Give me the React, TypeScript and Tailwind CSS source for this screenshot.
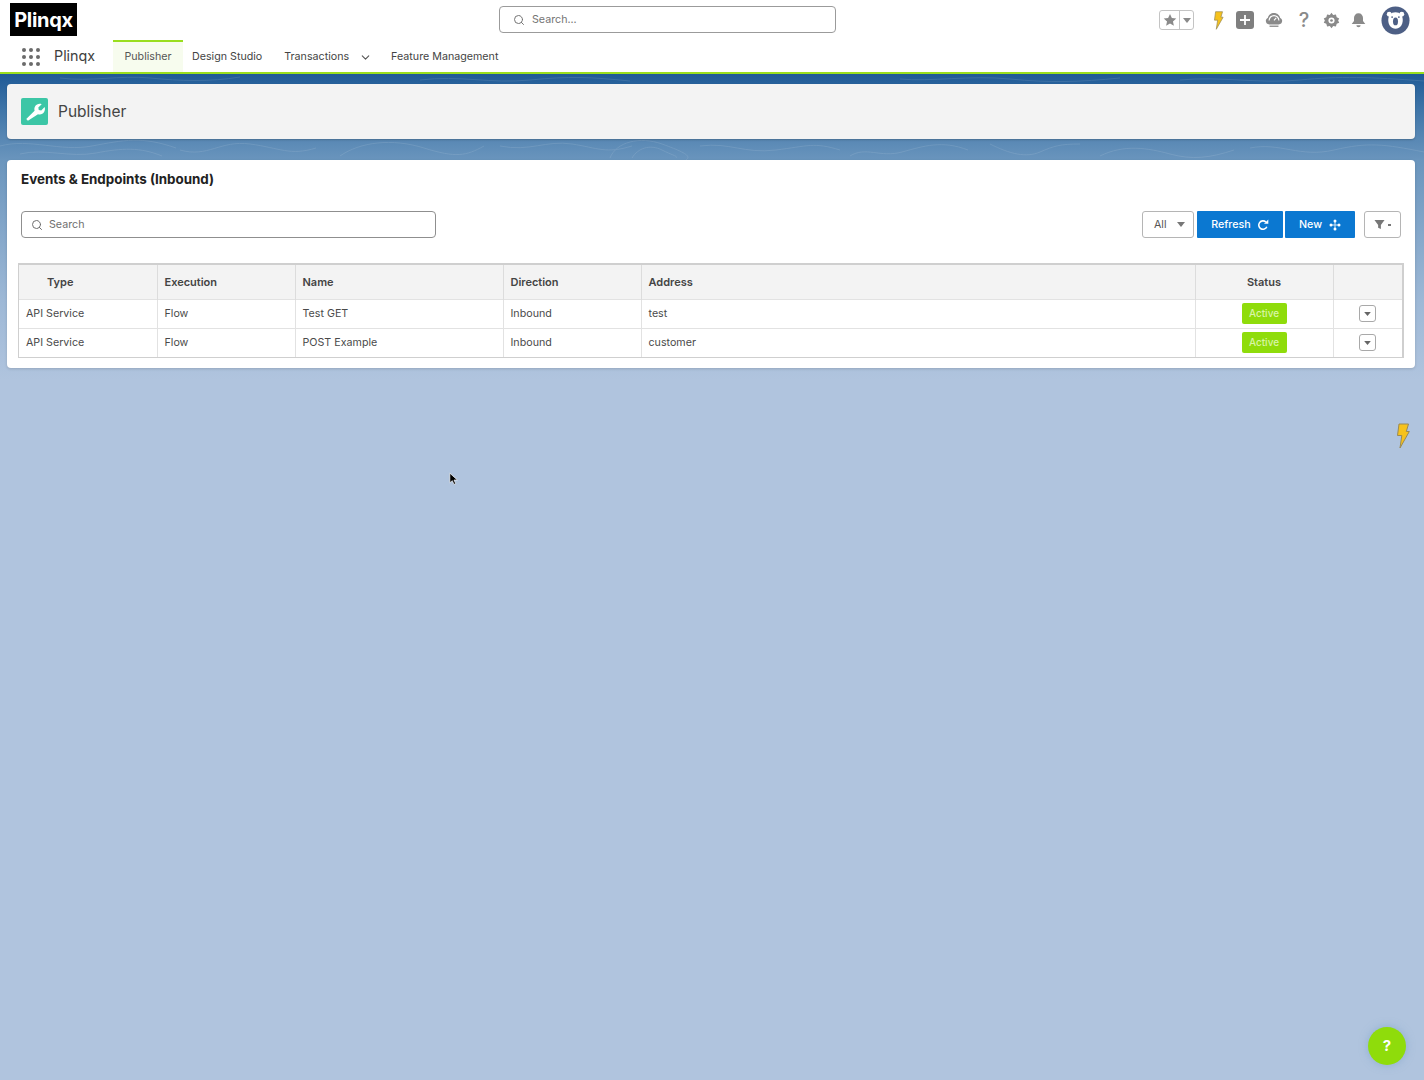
import { ChevronDown, Search } from "lucide-react";

const font = "font-['Inter','Liberation_Sans',sans-serif]";

const rows = [
  { type: "API Service", execution: "Flow", name: "Test GET", direction: "Inbound", address: "test" },
  { type: "API Service", execution: "Flow", name: "POST Example", direction: "Inbound", address: "customer" },
];

// contour lines of the banner behind the page header
const contours = [
  "M0 146c30-8 60 6 92 0s50-10 84 2",
  "M20 154c24-6 50 4 76-1s44-6 66 3",
  "M180 150c28 8 40-10 70-6s40 12 66 4",
  "M340 156c20-14 52-18 84-8s42 8 60-2",
  "M500 146c30 6 46-6 72-2s34 10 60 2",
  "M610 158c6-16 30-22 52-14s30 12 24 16",
  "M632 158c6-10 18-14 30-8s16 6 14 8",
  "M700 146c30-4 44 8 76 4s38-8 64 0",
  "M850 156c16-10 30 2 52-4s40-12 66-2",
  "M990 144c20 10 36 14 50 8s20-8 40-8",
  "M1100 156c24-12 48-8 70-2s40 4 64-4",
  "M1250 148c30-6 50 10 84 2s50-6 90 2",
  "M60 78c30 4 60-3 90 0s60 4 90-1",
  "M420 80c40-5 70 4 110 0s60-3 100 1",
  "M900 79c30 3 70-4 110 0s70 3 110-1",
  "M1180 80c40-4 80 4 120 0s70-3 124 1",
];

const Bolt = ({ className }: { className: string }) => (
  <svg viewBox="0 0 14 26" className={className}>
    <path d="M3 1h9.500l-2.200 7.500h3L4 25l1.800-12.500H1.500z" fill="#f6c21c" stroke="#9a8a55" strokeWidth="1" strokeLinejoin="round" />
  </svg>
);

const Caret = ({ className }: { className: string }) => (
  <svg viewBox="0 0 10 6" className={className}>
    <path d="M0 0h10L5 6z" fill="currentColor" />
  </svg>
);

const Header = () => (
  <header className="relative h-[74px] bg-white border-b-2 border-[#9ade1e]">
    <div className="flex items-start justify-between h-[40px]">
      <div className="ml-[10px] mt-[3px] w-[67px] h-[33px] bg-black flex items-center justify-center text-white text-[20px] font-bold tracking-[-0.3px]">
        Plinqx
      </div>
      <div className="absolute left-[499px] top-[6px] w-[337px] h-[27px] rounded-[4px] border border-[#9b9b9b] flex items-center pl-[13px] gap-[7px] text-[10.700px] text-[#747474]">
        <Search size={12} strokeWidth={2} />
        <span className="pt-[2px]">Search...</span>
      </div>
      <div className="flex items-center mt-[5px] mr-[14px] h-[30px]">
        <div className="flex items-center w-[35px] h-[20px] rounded-[3px] border border-[#c4c4c4] mr-[19px] text-[#8a8a8a]">
          <div className="w-[20px] flex justify-center border-r border-[#c4c4c4] h-full items-center">
            <svg viewBox="0 0 24 24" className="w-[14px] h-[14px]">
              <path d="M12 1.500l3.200 7 7.600.8-5.700 5.100 1.600 7.500L12 18l-6.700 3.900 1.600-7.500L1.200 9.300l7.600-.8z" fill="currentColor" />
            </svg>
          </div>
          <Caret className="w-[8px] h-[5px] ml-[3px]" />
        </div>
        <Bolt className="w-[11px] h-[19px] mr-[12px]" />
        <div className="w-[18px] h-[18px] rounded-[3px] bg-[#7f7f7f] flex items-center justify-center mr-[11px]">
          <svg viewBox="0 0 12 12" className="w-[12px] h-[12px]">
            <path d="M6 1v10M1 6h10" stroke="#fff" strokeWidth="1.800" />
          </svg>
        </div>
        <svg viewBox="0 0 20 18" className="w-[18px] h-[16px] mr-[15px]">
          <path d="M10 1c3.500 0 6.400 2.400 7 5.800 1.400.7 2.200 1.900 2.200 3.400 0 2.200-1.700 3.800-3.900 3.800H4.700C2.500 14 .8 12.400.8 10.200c0-1.500.8-2.700 2.200-3.400C3.600 3.400 6.500 1 10 1z" fill="#8a8a8a" />
          <path d="M4.500 9.500a5.500 5.500 0 0 1 11 0M10 9.500l2.500-3" stroke="#fff" strokeWidth="1.300" fill="none" />
          <path d="M5 16h10" stroke="#8a8a8a" strokeWidth="1.500" />
        </svg>
        <span className="text-[20px] leading-none font-medium text-[#8a8a8a] w-[12px] mr-[13px] text-center">?</span>
        <svg viewBox="0 0 20 20" className="w-[17px] h-[17px] mr-[10px]">
          <path d="M10 1l2 2.600 3.200-.6.900 3.200 3 1.300L17.800 10l1.300 2.500-3 1.300-.9 3.200-3.200-.6L10 19l-2-2.600-3.200.6-.9-3.200-3-1.300L2.200 10 .9 7.500l3-1.300.9-3.200 3.200.6z" fill="#8a8a8a" />
          <circle cx="10" cy="10" r="3.600" fill="#fff" />
          <circle cx="10" cy="10" r="1.600" fill="#8a8a8a" />
        </svg>
        <svg viewBox="0 0 20 20" className="w-[17px] h-[17px] mr-[14px]">
          <path d="M10 1.500c3.300 0 5.300 2.500 5.300 5.700v3.300l2.700 3.700H2l2.700-3.700V7.200C4.700 4 6.700 1.500 10 1.500z" fill="#8a8a8a" />
          <path d="M7.500 15.500h5a2.500 2.500 0 0 1-5 0z" fill="#8a8a8a" />
        </svg>
        <svg viewBox="0 0 30 30" className="w-[29px] h-[29px]">
          <circle cx="15" cy="15" r="14.500" fill="#4d5f85" />
          <circle cx="8.500" cy="8.500" r="2.500" fill="#fff" />
          <circle cx="21.500" cy="8.500" r="2.500" fill="#fff" />
          <path d="M15 6.500c5 0 7.500 3.500 7.500 8 0 5-3 9-7.500 9s-7.500-4-7.500-9c0-4.500 2.500-8 7.500-8z" fill="#fff" />
          <ellipse cx="15" cy="16" rx="2.600" ry="4" fill="#4d5f85" />
          <circle cx="11.500" cy="11.500" r=".9" fill="#4d5f85" />
          <circle cx="18.500" cy="11.500" r=".9" fill="#4d5f85" />
        </svg>
      </div>
    </div>
    <nav className="flex items-start h-[32px] text-[10.700px] text-[#444]">
      <div className="ml-[22px] mt-[8px] grid grid-cols-3 gap-[3px] w-[18px]">
        {Array.from({ length: 9 }).map((_, i) => (
          <span key={i} className="w-[4px] h-[4px] rounded-full bg-[#6b6b6b]" />
        ))}
      </div>
      <span className="ml-[14px] mt-[6px] w-[59px] text-[14.300px] leading-[20px] text-[#3e3e3e]">Plinqx</span>
      <div className="w-[70px] h-[32px] border-t-2 border-[#9ade1e] bg-[#f7fcee] flex items-center justify-center text-[#555]">
        Publisher
      </div>
      <span className="ml-[9px] mt-[10px] leading-[14px]">Design Studio</span>
      <span className="ml-[22px] mt-[10px] leading-[14px]">Transactions</span>
      <ChevronDown size={13} className="ml-[10px] mt-[11px] text-[#555]" />
      <span className="ml-[19px] mt-[10px] leading-[14px]">Feature Management</span>
    </nav>
  </header>
);

const Toolbar = () => (
  <div className="flex items-center justify-between mt-[23px] mx-[14px]">
    <div className="w-[415px] h-[27px] rounded-[4px] border border-[#8f8f8f] flex items-center pl-[9px] gap-[6px] text-[10.700px] text-[#6f6f6f]">
      <Search size={12} strokeWidth={2} />
      <span className="pt-[2px]">Search</span>
    </div>
    <div className="flex items-center h-[27px] text-[10.700px]">
      <div className="w-[52px] h-full rounded-[3px] border border-[#b5b5b5] flex items-center justify-between pl-[11px] pr-[8px] text-[#555]">
        <span className="pt-[2px]">All</span>
        <Caret className="w-[8px] h-[5px] text-[#777]" />
      </div>
      <div className="w-[86px] h-full ml-[3px] bg-[#0b78d1] flex items-center justify-center gap-[6px] text-white font-medium rounded-[1px]">
        <span className="pt-[2px]">Refresh</span>
        <svg viewBox="0 0 12 12" className="w-[12px] h-[12px] mt-[1px]">
          <path d="M9.800 7.800A4.200 4.200 0 1 1 8.800 3" fill="none" stroke="#fff" strokeWidth="1.600" />
          <path d="M7 4.700h4.300V.6z" fill="#fff" />
        </svg>
      </div>
      <div className="w-[70px] h-full ml-[2px] bg-[#0b78d1] flex items-center justify-center gap-[7px] text-white font-medium rounded-[1px]">
        <span className="pt-[2px]">New</span>
        <svg viewBox="0 0 12 12" className="w-[12px] h-[12px] mt-[1px]">
          <path d="M6 1v10M1 6h10" stroke="#cfe4f6" strokeWidth="1" />
          <circle cx="6" cy="2" r="1.500" fill="#fff" />
          <circle cx="6" cy="10" r="1.500" fill="#fff" />
          <circle cx="2" cy="6" r="1.500" fill="#fff" />
          <circle cx="10" cy="6" r="1.500" fill="#fff" />
        </svg>
      </div>
      <div className="w-[37px] h-full ml-[9px] rounded-[3px] border border-[#b5b5b5] flex items-center justify-center gap-[3px] text-[#777]">
        <svg viewBox="0 0 12 12" className="w-[11px] h-[11px]">
          <path d="M0.500 1h11L7.500 6.500V11L4.500 9.500v-3z" fill="currentColor" />
        </svg>
        <span className="w-[3px] h-[2px] bg-[#777]" />
      </div>
    </div>
  </div>
);

const EventsTable = () => (
  <div className="mt-[25px] mx-[11px] border border-t-2 border-r-2 border-[#cfcfcf]">
    <table className="w-full table-fixed border-collapse text-[10.700px] text-[#4a4a4a]">
      <colgroup>
        <col className="w-[138px]" />
        <col className="w-[138px]" />
        <col className="w-[208px]" />
        <col className="w-[138px]" />
        <col className="w-[554px]" />
        <col className="w-[138px]" />
        <col />
      </colgroup>
      <thead>
        <tr className="h-[34px] bg-[#f3f3f3] text-left text-[11px] text-[#444]">
          <th className="pl-[28px] pt-[1px] font-semibold border-r border-[#dcdcdc]">Type</th>
          <th className="pl-[7px] pt-[1px] font-semibold border-r border-[#dcdcdc]">Execution</th>
          <th className="pl-[7px] pt-[1px] font-semibold border-r border-[#dcdcdc]">Name</th>
          <th className="pl-[7px] pt-[1px] font-semibold border-r border-[#dcdcdc]">Direction</th>
          <th className="pl-[7px] pt-[1px] font-semibold border-r border-[#dcdcdc]">Address</th>
          <th className="pt-[1px] text-center font-semibold border-r border-[#dcdcdc]">Status</th>
          <th />
        </tr>
      </thead>
      <tbody>
        {rows.map((row) => (
          <tr key={row.name} className="h-[29px] border-t border-[#e2e2e2]">
            <td className="pl-[7px] pt-[1px] border-r border-[#e2e2e2]">{row.type}</td>
            <td className="pl-[7px] pt-[1px] border-r border-[#e2e2e2]">{row.execution}</td>
            <td className="pl-[7px] pt-[1px] border-r border-[#e2e2e2]">{row.name}</td>
            <td className="pl-[7px] pt-[1px] border-r border-[#e2e2e2]">{row.direction}</td>
            <td className="pl-[7px] pt-[1px] border-r border-[#e2e2e2]">{row.address}</td>
            <td className="border-r border-[#e2e2e2]">
              <div className="mx-auto w-[45px] h-[21px] rounded-[2px] bg-[#8fdc0b] text-[#d9f5a8] text-[10px] font-medium flex items-center justify-center">
                Active
              </div>
            </td>
            <td>
              <div className="ml-[25px] w-[17px] h-[17px] rounded-[3px] border border-[#a9a9a9] flex items-center justify-center text-[#666]">
                <Caret className="w-[7px] h-[4px]" />
              </div>
            </td>
          </tr>
        ))}
      </tbody>
    </table>
  </div>
);

export default function App() {
  return (
    <div
      className={`${font} relative h-[1080px] overflow-hidden bg-[linear-gradient(180deg,#1f5a96_74px,#3f75a8_110px,#6a95bd_160px,#9db8d6_300px,#b0c4de_380px)]`}
    >
      <svg viewBox="0 74 1424 100" className="absolute left-0 top-[74px] w-[1424px] h-[100px] text-white opacity-10">
        {contours.map((d) => (
          <path key={d} d={d} fill="none" stroke="currentColor" strokeWidth="1" />
        ))}
      </svg>
      <Header />
      <main className="relative pl-[7px] pr-[9px] pt-[10px]">
        <div className="h-[55px] rounded-[4px] bg-[#f3f3f3] flex items-center pl-[14px] gap-[10px] shadow-[0_1px_2px_rgba(0,0,0,0.2)]">
          <div className="w-[27px] h-[27px] rounded-[2px] bg-[#3cc6a6] flex items-center justify-center">
            <svg viewBox="0 0 24 24" className="w-[20px] h-[20px]">
              <path d="M3.500 22.500 1.500 20.500 11.500 10.500C10.700 7.500 11.700 4.500 14.500 3c1.800-1 3.800-1.100 5.500-.4l-4 4 .5 3 3 .5 4-4c.7 1.800.6 3.800-.4 5.500-1.500 2.800-4.500 3.800-7.500 3z" fill="#fff" />
            </svg>
          </div>
          <h1 className="text-[15.500px] font-normal text-[#444]">Publisher</h1>
        </div>
        <section className="mt-[21px] h-[208px] rounded-[4px] bg-white pt-[10px] shadow-[0_1px_3px_rgba(0,0,0,0.15)]">
          <h2 className="ml-[14px] text-[13.400px] leading-[18px] font-bold text-[#222]">Events &amp; Endpoints (Inbound)</h2>
          <Toolbar />
          <EventsTable />
        </section>
      </main>

      <Bolt className="absolute left-[1396px] top-[422px] w-[14px] h-[28px]" />
      <svg viewBox="0 0 12 16" className="absolute left-[449px] top-[472px] w-[10px] h-[14px]">
        <path d="M1 1v11.500l3-2.500 2 4.500 2-1-2-4.300h4z" fill="#000" stroke="#fff" strokeWidth=".8" />
      </svg>
      <div className="absolute left-[1368px] top-[1027px] w-[38px] h-[38px] rounded-full bg-[#8fdc0b] flex items-center justify-center text-white text-[15px] font-bold shadow-[0_0_8px_rgba(120,160,200,0.6)]">
        ?
      </div>
    </div>
  );
}
